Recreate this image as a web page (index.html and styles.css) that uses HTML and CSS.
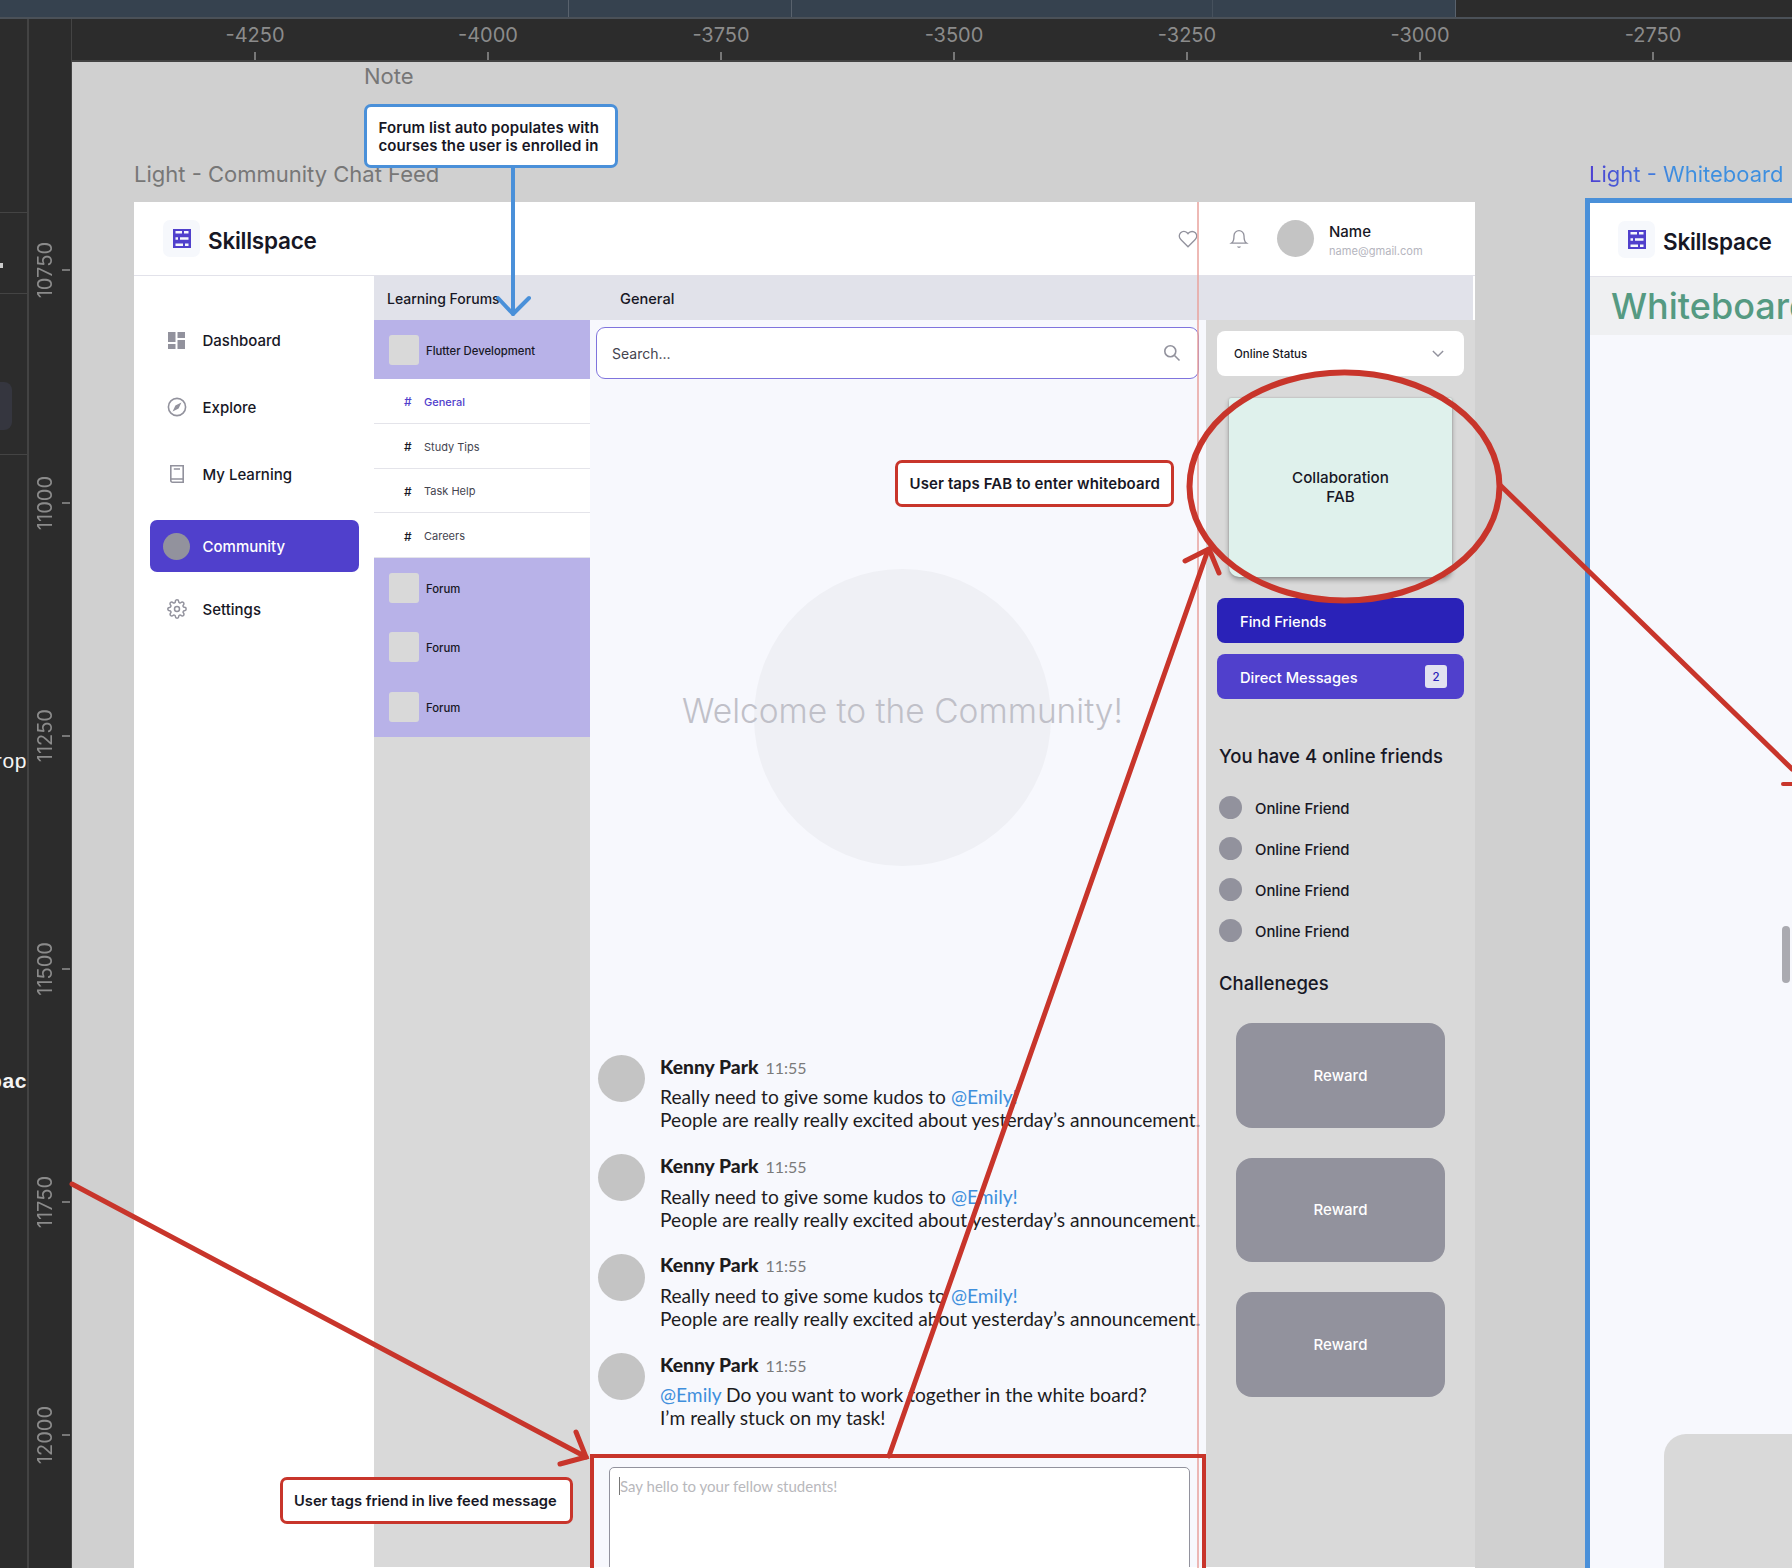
FILE: index.html
```html
<!DOCTYPE html>
<html lang="en">
<head>
<meta charset="utf-8">
<title>Skillspace – Community Chat Feed</title>
<link rel="stylesheet" href="styles.css">
</head>
<body>
<div class="editor">
  <div class="tabbar">
    <div class="tab tab-1"></div><div class="tab tab-2"></div><div class="tab tab-3"></div><div class="tab tab-4"></div><div class="tab tab-5"></div>
    <div class="tab-rest"></div>
  </div>
  <div class="workspace">
    <aside class="panel">
      <div class="panel-sec panel-a"></div>
      <div class="panel-sec panel-b"><span class="panel-mark"></span></div>
      <div class="panel-sec panel-c"><span class="panel-pill"></span></div>
      <div class="panel-rest">
        <span class="panel-word panel-word-1">rop</span>
        <span class="panel-word panel-word-2">pac</span>
      </div>
    </aside>
    <div class="rulers">
      <div class="ruler-top">
        <div class="rt"><span>-4250</span><i></i></div>
        <div class="rt"><span>-4000</span><i></i></div>
        <div class="rt"><span>-3750</span><i></i></div>
        <div class="rt"><span>-3500</span><i></i></div>
        <div class="rt"><span>-3250</span><i></i></div>
        <div class="rt"><span>-3000</span><i></i></div>
        <div class="rt"><span>-2750</span><i></i></div>
      </div>
      <div class="rulers-body">
        <div class="ruler-left">
          <div class="rl"><span>10750</span><i></i></div>
          <div class="rl"><span>11000</span><i></i></div>
          <div class="rl"><span>11250</span><i></i></div>
          <div class="rl"><span>11500</span><i></i></div>
          <div class="rl"><span>11750</span><i></i></div>
          <div class="rl"><span>12000</span><i></i></div>
        </div>
        <main class="canvas">
          <div class="frame-label note-label">Note</div>
          <div class="frame-label community-label">Light - Community Chat Feed</div>
          <div class="frame-label whiteboard-label">Light - Whiteboard</div>

          <section class="frame community">
            <header class="topbar">
              <div class="brand">
                <span class="logo"><svg viewBox="0 0 18 19" width="18" height="19"><path class="logo-ico" fill-rule="evenodd" d="M0 0H18V19H0ZM2.5 2V4.6H9V2ZM11 2V4.6H15.5V2ZM2.5 8.2V10.8H5V8.2ZM7 8.2V10.8H15.5V8.2ZM2.5 14.4V17H10V14.4ZM12 14.4V17H15.5V14.4Z"/></svg></span>
                <span class="brand-name">Skillspace</span>
              </div>
              <div class="user-tools">
                <svg class="ico-heart" viewBox="0 0 24 24" width="20" height="20"><path d="M20.84 4.61a5.5 5.5 0 0 0-7.78 0L12 5.67l-1.06-1.06a5.5 5.5 0 0 0-7.78 7.78l1.06 1.06L12 21.23l7.78-7.78 1.06-1.06a5.5 5.5 0 0 0 0-7.78z"/></svg>
                <svg class="ico-bell" viewBox="0 0 24 24" width="20" height="20"><path d="M18 8A6 6 0 0 0 6 8c0 7-3 9-3 9h18s-3-2-3-9"/><path d="M13.73 21a2 2 0 0 1-3.46 0"/></svg>
                <span class="avatar-top"></span>
                <div class="user-meta">
                  <div class="user-name">Name</div>
                  <div class="user-mail">name@gmail.com</div>
                </div>
              </div>
            </header>
            <div class="shell">
              <nav class="sidebar">
                <a class="nav-item">
                  <span class="nav-ico"><svg viewBox="0 0 17 17" width="17" height="17"><path class="fill-grey" d="M0 0H7.5V10H0ZM9.5 0H17V6H9.5ZM0 12H7.5V17H0ZM9.5 8H17V17H9.5Z"/></svg></span>Dashboard
                </a>
                <a class="nav-item">
                  <span class="nav-ico"><svg viewBox="0 0 20 20" width="20" height="20"><circle class="stroke-grey" cx="10" cy="10" r="8.6"/><path class="fill-grey" d="M14.4 5.6 11.6 11.6 5.6 14.4 8.4 8.4Z"/></svg></span>Explore
                </a>
                <a class="nav-item">
                  <span class="nav-ico"><svg viewBox="0 0 14 18" width="14" height="18"><path class="stroke-grey" d="M.8.8H13.2V17.2H2.5A1.7 1.7 0 0 1 .8 15.5ZM.8 14H13.2M3.8 4H10"/></svg></span>My Learning
                </a>
                <a class="nav-item nav-item-active">
                  <span class="nav-dot"></span>Community
                </a>
                <a class="nav-item">
                  <span class="nav-ico"><svg viewBox="0 0 24 24" width="20" height="20"><g class="stroke-grey stroke-gear"><circle cx="12" cy="12" r="3"/><path d="M19.4 15a1.65 1.65 0 0 0 .33 1.82l.06.06a2 2 0 0 1 0 2.83 2 2 0 0 1-2.83 0l-.06-.06a1.65 1.65 0 0 0-1.82-.33 1.65 1.65 0 0 0-1 1.51V21a2 2 0 0 1-2 2 2 2 0 0 1-2-2v-.09A1.65 1.65 0 0 0 9 19.4a1.65 1.65 0 0 0-1.82.33l-.06.06a2 2 0 0 1-2.83 0 2 2 0 0 1 0-2.83l.06-.06a1.65 1.65 0 0 0 .33-1.82 1.65 1.65 0 0 0-1.51-1H3a2 2 0 0 1-2-2 2 2 0 0 1 2-2h.09A1.65 1.65 0 0 0 4.6 9a1.65 1.65 0 0 0-.33-1.82l-.06-.06a2 2 0 0 1 0-2.83 2 2 0 0 1 2.83 0l.06.06a1.65 1.65 0 0 0 1.82.33H9a1.65 1.65 0 0 0 1-1.51V3a2 2 0 0 1 2-2 2 2 0 0 1 2 2v.09a1.65 1.65 0 0 0 1 1.51 1.65 1.65 0 0 0 1.82-.33l.06-.06a2 2 0 0 1 2.83 0 2 2 0 0 1 0 2.83l-.06.06a1.65 1.65 0 0 0-.33 1.82V9a1.65 1.65 0 0 0 1.51 1H21a2 2 0 0 1 2 2 2 2 0 0 1-2 2h-.09a1.65 1.65 0 0 0-1.51 1z"/></g></svg></span>Settings
                </a>
              </nav>
              <div class="workarea">
                <div class="band">
                  <div class="band-forums">Learning Forums</div>
                  <div class="band-general">General</div>
                </div>
                <div class="columns">
                  <div class="forums">
                    <div class="forum-row forum-row-top"><span class="thumb"></span>Flutter Development</div>
                    <div class="channel channel-active"><b>#</b>General</div>
                    <div class="channel"><b>#</b>Study Tips</div>
                    <div class="channel"><b>#</b>Task Help</div>
                    <div class="channel"><b>#</b>Careers</div>
                    <div class="forum-row"><span class="thumb"></span>Forum</div>
                    <div class="forum-row"><span class="thumb"></span>Forum</div>
                    <div class="forum-row"><span class="thumb"></span>Forum</div>
                  </div>
                  <div class="chat">
                    <div class="search">
                      <span>Search...</span>
                      <svg viewBox="0 0 18 18" width="18" height="18"><circle class="stroke-grey" cx="7.3" cy="7.3" r="5.5"/><path class="stroke-grey" d="M11.5 11.5 16.5 16.5"/></svg>
                    </div>
                    <div class="welcome">
                      <span class="welcome-circle"></span>
                      <span class="welcome-text">Welcome to the Community!</span>
                    </div>
                    <div class="messages">
                      <article class="msg">
                        <span class="msg-avatar"></span>
                        <div>
                          <div class="msg-head"><strong>Kenny Park</strong><time>11:55</time></div>
                          <p class="msg-body">Really need to give some kudos to <span class="mention">@Emily!</span><br>People are really really excited about yesterday’s announcement.</p>
                        </div>
                      </article>
                      <article class="msg">
                        <span class="msg-avatar"></span>
                        <div>
                          <div class="msg-head"><strong>Kenny Park</strong><time>11:55</time></div>
                          <p class="msg-body">Really need to give some kudos to <span class="mention">@Emily!</span><br>People are really really excited about yesterday’s announcement.</p>
                        </div>
                      </article>
                      <article class="msg">
                        <span class="msg-avatar"></span>
                        <div>
                          <div class="msg-head"><strong>Kenny Park</strong><time>11:55</time></div>
                          <p class="msg-body">Really need to give some kudos to <span class="mention">@Emily!</span><br>People are really really excited about yesterday’s announcement.</p>
                        </div>
                      </article>
                      <article class="msg">
                        <span class="msg-avatar"></span>
                        <div>
                          <div class="msg-head"><strong>Kenny Park</strong><time>11:55</time></div>
                          <p class="msg-body"><span class="mention">@Emily</span> Do you want to work together in the white board?<br>I’m really stuck on my task!</p>
                        </div>
                      </article>
                    </div>
                    <div class="composer">
                      <div class="composer-box"><span class="placeholder">Say hello to your fellow students!</span></div>
                    </div>
                  </div>
                  <aside class="rail">
                    <div class="status">
                      <span>Online Status</span>
                      <svg viewBox="0 0 14 8" width="12" height="7"><path class="stroke-grey" d="M1 1 7 7 13 1"/></svg>
                    </div>
                    <div class="fab">Collaboration<br>FAB</div>
                    <div class="action action-find">Find Friends</div>
                    <div class="action action-dm">Direct Messages<span class="badge">2</span></div>
                    <h2 class="rail-title rail-online">You have 4 online friends</h2>
                    <ul class="friends">
                      <li><span class="friend-dot"></span>Online Friend</li>
                      <li><span class="friend-dot"></span>Online Friend</li>
                      <li><span class="friend-dot"></span>Online Friend</li>
                      <li><span class="friend-dot"></span>Online Friend</li>
                    </ul>
                    <h2 class="rail-title rail-challenges">Challeneges</h2>
                    <div class="rewards">
                      <div class="reward">Reward</div>
                      <div class="reward">Reward</div>
                      <div class="reward">Reward</div>
                    </div>
                  </aside>
                </div>
              </div>
            </div>
          </section>

          <section class="frame whiteboard">
            <header class="topbar topbar-wb">
              <div class="brand">
                <span class="logo"><svg viewBox="0 0 18 19" width="18" height="19"><path class="logo-ico" fill-rule="evenodd" d="M0 0H18V19H0ZM2.5 2V4.6H9V2ZM11 2V4.6H15.5V2ZM2.5 8.2V10.8H5V8.2ZM7 8.2V10.8H15.5V8.2ZM2.5 14.4V17H10V14.4ZM12 14.4V17H15.5V14.4Z"/></svg></span>
                <span class="brand-name">Skillspace</span>
              </div>
            </header>
            <div class="wb-title">Whiteboard</div>
            <div class="wb-body">
              <span class="wb-scroll"></span>
              <span class="wb-card"></span>
            </div>
          </section>

          <div class="callout callout-blue">Forum list auto populates with courses the user is enrolled in</div>
          <div class="callout callout-fab">User taps FAB to enter whiteboard</div>
          <div class="callout callout-tag">User tags friend in live feed message</div>
        </main>
      </div>
    </div>
  </div>
  <svg class="annotations" viewBox="0 0 1792 1568" width="1792" height="1568">
    <line class="guide" x1="1198" y1="202" x2="1198" y2="1568"/>
    <g class="blue-arrow">
      <path d="M513 168V314"/>
      <path d="M498 298 513 314 529 298"/>
    </g>
    <g class="red-arrow">
      <ellipse cx="1344.5" cy="486.5" rx="155" ry="114"/>
      <rect x="592" y="1456" width="612" height="200"/>
      <path d="M889 1456 1208 550"/>
      <path d="M1185 561 1209 549 1219 573"/>
      <path d="M1500 485 1792 769"/>
      <path class="red-thick" d="M1783 784H1792"/>
      <path d="M72 1184 586 1457"/>
      <path d="M576 1432 586 1457 560 1464"/>
    </g>
  </svg>
</div>
</body>
</html>
```
FILE: styles.css
```css
* { box-sizing: border-box; }
html, body { margin: 0; padding: 0; }
body {
  width: 1792px;
  height: 1568px;
  overflow: hidden;
  background: #2c2c2c;
  font-family: "Inter", "Noto Sans", sans-serif;
  color: #171725;
}
h2, p, ul { margin: 0; padding: 0; }
ul { list-style: none; }

.editor { position: relative; width: 1792px; height: 1568px; overflow: hidden; }

/* editor chrome */
.tabbar { display: flex; height: 19px; background: #2c2c2c; border-bottom: 2px solid #4b5158; }
.tab { background: #36424f; border-right: 1px solid #59626d; }
.tab-1 { width: 232px; border-right: 1px solid #36424f; }
.tab-2 { width: 337px; }
.tab-3 { width: 223px; }
.tab-4 { width: 421px; border-right-color: #46515d; }
.tab-5 { width: 243px; }
.tab-rest { flex: 1; }

.workspace { display: flex; height: 1549px; }
.panel { flex: 0 0 29px; display: flex; flex-direction: column; border-right: 2px solid #434343; background: #2c2c2c; overflow: hidden; }
.panel-sec { border-bottom: 1px solid #444; position: relative; }
.panel-a { height: 194px; }
.panel-b { height: 81px; }
.panel-c { height: 161px; }
.panel-mark { position: absolute; left: 0; top: 50px; width: 3px; height: 5px; background: #ccc; }
.panel-pill { position: absolute; left: -14px; top: 88px; width: 26px; height: 48px; border-radius: 8px; background: #35363f; }
.panel-rest { position: relative; flex: 1; }
.panel-word { position: absolute; right: 0; color: #f4f4f4; font-family: "Liberation Sans", sans-serif; font-size: 21px; line-height: 24px; white-space: nowrap; letter-spacing: .6px; }
.panel-word-1 { top: 294px; }
.panel-word-2 { top: 614px; font-weight: 700; }

.rulers { flex: 1; display: flex; flex-direction: column; min-width: 0; }
.ruler-top { display: flex; flex: 0 0 43px; padding-left: 66.5px; margin-left: 42px; background: #2c2c2c; border-left: 1px solid #444; border-bottom: 2px solid #424242; position: relative; }
.rt { flex: 0 0 233px; display: flex; flex-direction: column; align-items: center; }
.rt span { font: 400 20px/24px "Inter", sans-serif; color: #8b8b8b; margin-top: 4px; }
.rt i { width: 2px; height: 8px; background: #777; margin-top: 5px; }

.rulers-body { flex: 1; display: flex; min-height: 0; }
.ruler-left { flex: 0 0 43px; padding-top: 91.5px; padding-right: 1px; border-right: 1px solid #444; background: #2c2c2c; }
.rl { height: 233px; display: flex; align-items: center; justify-content: flex-end; }
.rl span { writing-mode: vertical-rl; transform: rotate(180deg); font: 400 20px/24px "Inter", sans-serif; color: #8b8b8b; margin-right: 5px; }
.rl i { width: 8px; height: 2px; background: #777; }

/* free canvas */
.canvas { flex: 1; position: relative; background: #d0d0d0; overflow: hidden; }
.frame-label { position: absolute; font: 400 22px/28px "Inter", sans-serif; color: #777; white-space: nowrap; }
.note-label { left: 292px; top: 0; }
.community-label { left: 62px; top: 98px; }
.whiteboard-label {
  left: 1517px; top: 98px;
  background: linear-gradient(90deg, #4d40d2, #3d8fe0 45%);
  -webkit-background-clip: text; background-clip: text; color: transparent;
}

.frame { position: absolute; overflow: hidden; background: #fff; }
.community { left: 62px; top: 140px; width: 1341px; height: 1366px; }
.whiteboard { left: 1513px; top: 136px; width: 260px; height: 1370px; border: solid #4a90d9; border-width: 5px 0 0 5px; background: #f7f8fd; }

/* header */
.topbar { display: flex; align-items: center; height: 74px; background: #fff; border-bottom: 1px solid #e2e2ea; padding: 0 14px 0 29px; }
.topbar-wb { height: 74px; padding-left: 28px; }
.brand { display: flex; align-items: center; gap: 8px; }
.logo { width: 37px; height: 37px; border-radius: 7px; background: #f6f8fc; display: flex; align-items: center; justify-content: center; }
.logo-ico { fill: #5040cc; }
.brand-name { font-size: 22.5px; letter-spacing: -.25px; font-weight: 600; line-height: 32px; color: #171725; margin-top: 4px; }
.user-tools { margin-left: auto; display: flex; align-items: center; }
.ico-heart, .ico-bell { fill: none; stroke: #92929d; stroke-width: 1.6; }
.ico-bell { margin-left: 31.5px; }
.avatar-top { width: 37px; height: 37px; border-radius: 50%; background: #c4c4c4; margin-left: 28px; }
.user-meta { width: 132px; margin-left: 15px; }
.user-name { font-size: 15px; font-weight: 500; line-height: 18px; color: #171725; margin-top: 4px; }
.user-mail { font-size: 11.1px; line-height: 14px; margin-top: 3px; color: #b5b5be; }

.shell { display: flex; height: 1291px; }
.sidebar { flex: 0 0 240px; display: flex; flex-direction: column; padding: 30.5px 15px 0 16px; background: #fff; }
.nav-item { display: flex; align-items: center; height: 67px; padding: 1px 0 0 13px; font-size: 15px; font-weight: 500; color: #171725; }
.nav-ico { width: 27px; height: 27px; margin: -1px 12.5px 0 0; display: flex; align-items: center; justify-content: center; }
.fill-grey { fill: #92929d; }
.stroke-grey { fill: none; stroke: #92929d; stroke-width: 1.6; }
.stroke-gear { stroke-width: 1.8; }
.nav-item-active { height: 52px; margin: 12.5px 0 3.5px; border-radius: 7px; background: #5040cc; color: #fff; }
.nav-dot { width: 27px; height: 27px; border-radius: 50%; background: #92929d; margin: -1px 12.5px 0 0; }

.workarea { flex: 1; display: flex; flex-direction: column; min-width: 0; }
.band { display: flex; flex: 0 0 44px; margin-right: 2px; padding-top: 1.5px; align-items: center; background: #e1e2ea; font-size: 14px; font-weight: 500; }
.band-forums { width: 246px; padding-left: 13px; }
.band-general { font-size: 14.6px; }
.columns { display: grid; grid-template-columns: 216px 616px 269px; flex: 1; min-height: 0; }

.forums { background: #d9d9d9; }
.forum-row { display: flex; align-items: center; height: 59.67px; padding: 2px 0 0 15px; background: #b8b2e8; font-size: 11.3px; font-weight: 500; color: #171725; }
.forum-row-top { height: 59px; }
.thumb { width: 30px; height: 30px; border-radius: 3px; background: #d9d9d9; margin: -2px 7px 0 0; }
.channel { display: flex; align-items: center; height: 44.75px; padding: 2px 0 0 30px; background: #fff; border-bottom: 1px solid #e4e4ea; font-size: 11px; color: #44444f; }
.channel b { width: 20px; font-weight: 500; font-size: 12px; color: #171725; }
.channel-active, .channel-active b { color: #5040cc; font-weight: 500; }

.chat { display: flex; flex-direction: column; background: #f7f8fd; min-width: 0; overflow: hidden; }
.search { flex: 0 0 52px; display: flex; align-items: center; justify-content: space-between; margin: 7px 7px 0 6px; padding: 0 17px 0 15px; background: #fff; border: 1px solid #7f74dd; border-radius: 9px; font-size: 14px; color: #44444f; }
.welcome { flex: 0 0 676px; display: grid; place-items: center; padding-left: 9px; }
.welcome-circle, .welcome-text { grid-area: 1 / 1; }
.welcome-circle { width: 297px; height: 297px; border-radius: 50%; background: #eff0f5; }
.welcome-text { font-size: 33.5px; font-weight: 300; line-height: 44px; color: #c0c0c8; margin-bottom: 12px; white-space: nowrap; }
.messages { display: flex; flex-direction: column; font-family: "Lato", sans-serif; }
.msg { display: flex; height: 99.4px; padding-left: 8px; gap: 15px; }
.msg-avatar { flex: 0 0 47px; height: 47px; border-radius: 50%; background: #c4c4c4; }
.msg-head { display: flex; align-items: baseline; gap: 7px; line-height: 24px; margin-top: -.5px; }
.msg-head strong { font-size: 19.3px; font-weight: 900; color: #1d1c1d; }
.msg-head time { font-size: 16px; color: #7a7a7a; }
.msg-body { margin-top: 5.8px; font-size: 19.2px; line-height: 23px; color: #1d1c1d; white-space: nowrap; }
.mention { color: #3f8fdc; }
.composer { flex: 1; padding: 14.4px 16px 0 19px; }
.composer-box { height: 200px; background: #fff; border: 1px solid #92929d; border-radius: 5px; padding: 8px 9px; }
.placeholder { display: inline-block; border-left: 1px solid #777; font-family: "Lato", sans-serif; font-size: 15px; line-height: 18px; color: #b8b8bc; }

.rail { background: #d9d9d9; padding: 11px 11px 0; min-width: 0; }
.status { display: flex; align-items: center; justify-content: space-between; height: 45px; padding: 0 20px 0 17px; background: #fff; border-radius: 8px; font-size: 11.5px; font-weight: 500; color: #171725; }
.fab { display: flex; align-items: center; justify-content: center; text-align: center; height: 179px; margin: 22px 12px 0; background: #dff1ec; border-radius: 2px 2px 10px 10px; box-shadow: 0 3px 5px rgba(0,0,0,.3), 0 0 2px rgba(0,0,0,.2); font-size: 15.2px; font-weight: 500; line-height: 18.5px; color: #171725; }
.action { display: flex; align-items: center; justify-content: space-between; height: 45px; padding: 2px 17px 0 23px; border-radius: 8px; color: #fff; font-size: 14.7px; font-weight: 500; }
.action-find { margin-top: 21px; background: #2a22b8; }
.action-dm { margin-top: 11px; background: #5040cc; }
.badge { display: flex; align-items: center; justify-content: center; width: 22px; height: 23px; margin-top: -2px; border-radius: 3px; background: #e1e2f0; color: #2a22b8; font-size: 11.5px; }
.rail-title { font-size: 18.5px; font-weight: 500; line-height: 24px; color: #171725; margin-left: 2px; }
.rail-online { margin-top: 45px; }
.rail-challenges { margin-top: 20.5px; }
.friends { margin: 18.5px 0 0 2px; }
.friends li { display: flex; align-items: center; height: 41px; padding-top: 3px; font-size: 14.9px; font-weight: 500; color: #171725; }
.friend-dot { width: 23px; height: 23px; border-radius: 50%; background: #92929d; margin: -3px 13px 0 0; }
.rewards { display: flex; flex-direction: column; gap: 30px; margin: 28px 19px 0 19px; }
.reward { display: flex; align-items: center; justify-content: center; height: 104.5px; border-radius: 16px; background: #92929d; color: #fff; font-size: 15px; font-weight: 500; }

/* whiteboard frame */
.wb-title { height: 58px; padding-left: 21px; background: #eff0f2; font-size: 36px; font-weight: 500; line-height: 59px; color: #559a82; white-space: nowrap; }
.wb-body { position: relative; height: 1240px; }
.wb-scroll { position: absolute; left: 192px; top: 591px; width: 8px; height: 57px; border-radius: 4px; background: #aaaab0; }
.wb-card { position: absolute; left: 74px; top: 1099px; width: 220px; height: 300px; border-radius: 22px; background: #d9d9d9; }

/* annotations */
.callout { position: absolute; display: flex; align-items: center; background: #fff; border: 3px solid #c8352b; border-radius: 7px; font-size: 15px; letter-spacing: .1px; font-weight: 600; line-height: 18px; color: #171725; white-space: nowrap; padding-left: 11.5px; }
.callout-blue { left: 292px; top: 42px; width: 253.5px; height: 64px; border-color: #4a90d9; white-space: normal; padding: 1px 0 0 11.5px; }
.callout-fab { left: 823px; top: 398px; width: 279px; height: 47px; }
.callout-tag { left: 208px; top: 1415px; width: 293px; height: 47px; font-size: 14.7px; letter-spacing: 0; padding-left: 11px; }

.annotations { position: absolute; left: 0; top: 0; pointer-events: none; }
.guide { stroke: #e8a29c; stroke-width: 1.5; }
.blue-arrow path { fill: none; stroke: #4a90d9; stroke-width: 4; stroke-linecap: round; stroke-linejoin: round; }
.red-arrow ellipse, .red-arrow path, .red-arrow rect { fill: none; stroke: #c8352b; stroke-width: 5; stroke-linecap: round; stroke-linejoin: miter; }
.red-arrow rect { stroke-width: 4; }
.red-arrow ellipse { stroke-width: 6; }
.red-arrow .red-thick { stroke-width: 4; }
```
